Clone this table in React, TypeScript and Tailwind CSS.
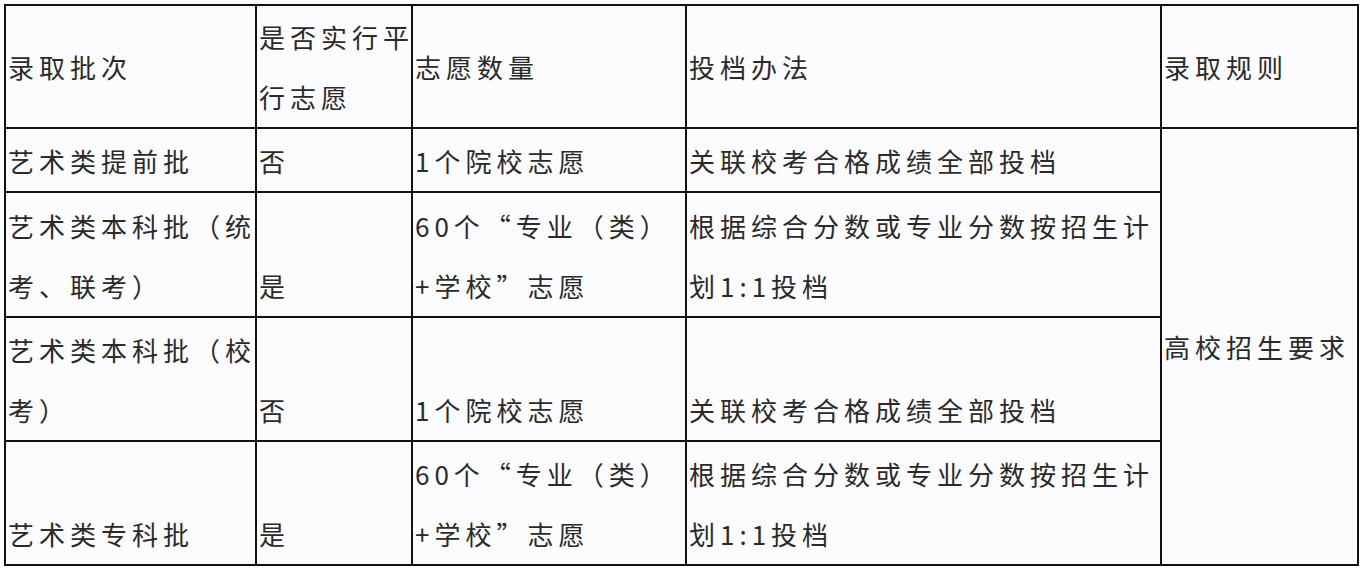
const font = { fontFamily: '"Noto Sans CJK SC", "Noto Sans", sans-serif' };

const cell = "border-2 border-[#111] pl-[2px] pr-0 align-bottom whitespace-nowrap";

export default function App() {
  return (
    <div className="min-h-screen bg-white pt-[4px] pl-[4px]" style={font}>
      <table className="w-[1353px] table-fixed border-collapse bg-[#fcfcfe] text-[26px] leading-[60px] tracking-[5px] text-[#2a2a2a]">
        <colgroup>
          <col className="w-[251px]" />
          <col className="w-[156px]" />
          <col className="w-[274px]" />
          <col className="w-[475px]" />
          <col className="w-[197px]" />
        </colgroup>
        <tbody>
          <tr className="h-[123px]">
            <td className={`${cell} !align-middle`}>录取批次</td>
            <td className={`${cell} !align-middle`}>
              是否实行平
              <br />
              行志愿
            </td>
            <td className={`${cell} !align-middle`}>志愿数量</td>
            <td className={`${cell} !align-middle`}>投档办法</td>
            <td className={`${cell} !align-middle`}>录取规则</td>
          </tr>
          <tr className="h-[64px]">
            <td className={cell}>艺术类提前批</td>
            <td className={cell}>否</td>
            <td className={cell}>1个院校志愿</td>
            <td className={cell}>关联校考合格成绩全部投档</td>
            <td className={`${cell} !align-middle`} rowSpan={4}>
              高校招生要求
            </td>
          </tr>
          <tr className="h-[125px]">
            <td className={cell}>
              艺术类本科批（统
              <br />
              考、联考）
            </td>
            <td className={cell}>是</td>
            <td className={cell}>
              60个“专业（类）
              <br />
              +学校”志愿
            </td>
            <td className={cell}>
              根据综合分数或专业分数按招生计
              <br />
              划1:1投档
            </td>
          </tr>
          <tr className="h-[124px]">
            <td className={cell}>
              艺术类本科批（校
              <br />
              考）
            </td>
            <td className={cell}>否</td>
            <td className={cell}>1个院校志愿</td>
            <td className={cell}>关联校考合格成绩全部投档</td>
          </tr>
          <tr className="h-[124px]">
            <td className={cell}>艺术类专科批</td>
            <td className={cell}>是</td>
            <td className={cell}>
              60个“专业（类）
              <br />
              +学校”志愿
            </td>
            <td className={cell}>
              根据综合分数或专业分数按招生计
              <br />
              划1:1投档
            </td>
          </tr>
        </tbody>
      </table>
    </div>
  );
}
